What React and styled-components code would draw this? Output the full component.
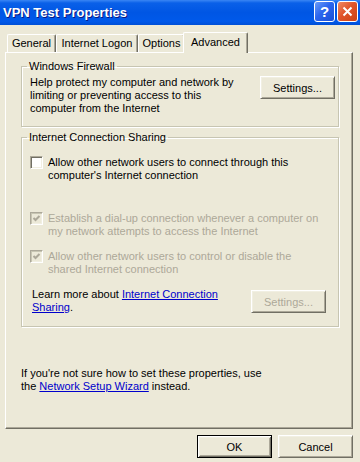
import React from 'react';
import styled, { createGlobalStyle, css } from 'styled-components';

const GlobalStyle = createGlobalStyle`
  html, body {
    margin: 0;
    padding: 0;
    background: #ece9d8;
  }
  body {
    font-family: "Liberation Sans", Arial, sans-serif;
    font-size: 11px;
    line-height: 13px;
    color: #000;
  }
`;

const Window = styled.div`
  width: 360px;
  height: 462px;
  display: flex;
  flex-direction: column;
  overflow: hidden;
  background: #ece9d8;
`;

const TitleBar = styled.div`
  height: 25px;
  flex: none;
  display: flex;
  align-items: center;
  justify-content: space-between;
  padding: 0 2px 0 3px;
  background: linear-gradient(
    to bottom,
    #3a86f4 0%,
    #0a60e8 12%,
    #0056e4 50%,
    #0059ea 85%,
    #004fd6 100%
  );
`;

const Title = styled.span`
  font-weight: bold;
  font-size: 13px;
  color: #fff;
  text-shadow: 1px 1px 0 #0a1883;
  white-space: nowrap;
`;

const TitleButtons = styled.div`
  display: flex;
  gap: 2px;
  align-self: flex-start;
  margin-top: 1px;
`;

const CaptionButton = styled.div`
  width: 21px;
  height: 21px;
  box-sizing: border-box;
  border: 1px solid #fff;
  border-radius: 3px;
  display: flex;
  align-items: center;
  justify-content: center;
  color: #fff;
  font-weight: bold;
  font-size: 15px;
  ${(p) =>
    p.$close
      ? css`
          background: linear-gradient(135deg, #f08a64 0%, #e0552b 45%, #cc4214 100%);
        `
      : css`
          background: linear-gradient(135deg, #6b9cf8 0%, #2c66ee 45%, #1a4ed6 100%);
        `}
`;

const Body = styled.div`
  flex: 1;
  display: flex;
  flex-direction: column;
  padding: 7px 7px 0 5px;
`;

const TabRow = styled.div`
  display: flex;
  align-items: flex-end;
  height: 20px;
  padding-left: 2px;
`;

const Tab = styled.div`
  box-sizing: border-box;
  width: ${(p) => p.$width}px;
  height: 18px;
  display: flex;
  align-items: center;
  justify-content: center;
  border-top: 1px solid #fff;
  border-left: 1px solid #fff;
  border-right: 1px solid #716f64;
  box-shadow: inset -1px 0 0 #aca899;
  border-radius: 2px 2px 0 0;
  background: #ece9d8;
  white-space: nowrap;
  ${(p) =>
    p.$active &&
    css`
      position: relative;
      z-index: 1;
      height: 21px;
      margin-left: -2px;
      margin-bottom: -1px;
      padding-bottom: 2px;
    `}
`;

const Panel = styled.div`
  box-sizing: border-box;
  height: 377px;
  display: flex;
  flex-direction: column;
  padding: 7px 13px 0 15px;
  border-top: 1px solid #fff;
  border-left: 1px solid #fff;
  border-right: 1px solid #716f64;
  border-bottom: 1px solid #716f64;
  box-shadow: inset -1px -1px 0 #aca899;
`;

const GroupBox = styled.fieldset`
  margin: ${(p) => p.$gap || 0}px 0 0 0;
  padding: 0;
  min-width: 0;
  border: 1px solid #c7c5b2;
  box-shadow: inset 1px 1px 0 #fff, 1px 1px 0 #fff;
`;

const GroupTitle = styled.legend`
  margin-left: 5px;
  padding: 0 2px;
  line-height: 13px;
`;

const FirewallRow = styled.div`
  display: flex;
  justify-content: space-between;
  align-items: flex-start;
  padding: 3px 3px 11px 8px;
`;

const SharingBody = styled.div`
  display: flex;
  flex-direction: column;
  padding: 12px 0 12px 0;
`;

const Text = styled.div`
  white-space: nowrap;
  color: ${(p) => (p.$disabled ? '#aca899' : '#000')};
`;

const CheckRow = styled.label`
  display: flex;
  align-items: flex-start;
  gap: 5px;
  padding-left: 8px;
  margin-top: ${(p) => p.$gap || 0}px;
`;

const CheckBox = styled.span`
  flex: none;
  box-sizing: border-box;
  width: 13px;
  height: 13px;
  display: flex;
  align-items: center;
  justify-content: center;
  border-top: 1px solid #aca899;
  border-left: 1px solid #aca899;
  border-bottom: 1px solid #fff;
  border-right: 1px solid #fff;
  box-shadow: inset 1px 1px 0 #716f64, inset -1px -1px 0 #f1efe2;
  background: ${(p) => (p.$disabled ? '#ece9d8' : '#fff')};
  ${(p) =>
    p.$disabled &&
    css`
      box-shadow: inset 1px 1px 0 #c7c5b2, inset -1px -1px 0 #f1efe2;
    `}
`;

const LearnRow = styled.div`
  display: flex;
  justify-content: space-between;
  align-items: flex-start;
  margin-top: 12px;
  padding: 0 12px 0 10px;
`;

const Link = styled.a`
  color: #0000cc;
  text-decoration: underline;
  cursor: pointer;
`;

const Button = styled.button`
  box-sizing: border-box;
  width: 75px;
  height: 23px;
  padding: 0;
  margin: ${(p) => p.$offset || 0}px 0 0 0;
  font-family: "Liberation Sans", Arial, sans-serif;
  font-size: 11px;
  background: #ece9d8;
  color: ${(p) => (p.disabled ? '#aca899' : '#000')};
  border: 1px solid;
  border-color: #fff #716f64 #716f64 #fff;
  box-shadow: inset 1px 1px 0 #f1efe2, inset -1px -1px 0 #aca899;
  ${(p) =>
    p.$default &&
    css`
      border-color: #000;
      box-shadow: inset 1px 1px 0 #fff, inset -1px -1px 0 #716f64,
        inset 2px 2px 0 #f1efe2, inset -2px -2px 0 #aca899;
    `}
`;

const Hint = styled.div`
  margin-top: 40px;
  white-space: nowrap;
`;

const ButtonRow = styled.div`
  display: flex;
  justify-content: flex-end;
  gap: 6px;
  margin-top: 6px;
`;

const tabs = [
  { label: 'General', width: 49 },
  { label: 'Internet Logon', width: 82 },
  { label: 'Options', width: 47 },
  { label: 'Advanced', width: 65, active: true },
];

const CheckMark = () => (
  <svg width="9" height="9" viewBox="0 0 9 9">
    <path d="M1.5 4 L3.5 6 L7.5 2" fill="none" stroke="#aca899" strokeWidth="2" />
  </svg>
);

const CloseIcon = () => (
  <svg width="11" height="11" viewBox="0 0 11 11">
    <path d="M1.5 1.5 L9.5 9.5 M9.5 1.5 L1.5 9.5" stroke="#fff" strokeWidth="2" />
  </svg>
);

const App = () => {
  return (
    <Window>
      <GlobalStyle />
      <TitleBar>
        <Title>VPN Test Properties</Title>
        <TitleButtons>
          <CaptionButton>?</CaptionButton>
          <CaptionButton $close>
            <CloseIcon />
          </CaptionButton>
        </TitleButtons>
      </TitleBar>

      <Body>
        <TabRow>
          {tabs.map((tab) => (
            <Tab key={tab.label} $width={tab.width} $active={tab.active}>
              {tab.label}
            </Tab>
          ))}
        </TabRow>

        <Panel>
          <GroupBox>
            <GroupTitle>Windows Firewall</GroupTitle>
            <FirewallRow>
              <Text>
                Help protect my computer and network by
                <br />
                limiting or preventing access to this
                <br />
                computer from the Internet
              </Text>
              <Button>Settings...</Button>
            </FirewallRow>
          </GroupBox>

          <GroupBox $gap={4}>
            <GroupTitle>Internet Connection Sharing</GroupTitle>
            <SharingBody>
              <CheckRow>
                <CheckBox />
                <Text>
                  Allow other network users to connect through this
                  <br />
                  computer's Internet connection
                </Text>
              </CheckRow>
              <CheckRow $gap={30}>
                <CheckBox $disabled>
                  <CheckMark />
                </CheckBox>
                <Text $disabled>
                  Establish a dial-up connection whenever a computer on
                  <br />
                  my network attempts to access the Internet
                </Text>
              </CheckRow>
              <CheckRow $gap={12}>
                <CheckBox $disabled>
                  <CheckMark />
                </CheckBox>
                <Text $disabled>
                  Allow other network users to control or disable the
                  <br />
                  shared Internet connection
                </Text>
              </CheckRow>
              <LearnRow>
                <Text>
                  Learn more about <Link>Internet Connection</Link>
                  <br />
                  <Link>Sharing</Link>.
                </Text>
                <Button disabled $offset={2}>
                  Settings...
                </Button>
              </LearnRow>
            </SharingBody>
          </GroupBox>

          <Hint>
            If you're not sure how to set these properties, use
            <br />
            the <Link>Network Setup Wizard</Link> instead.
          </Hint>
        </Panel>

        <ButtonRow>
          <Button $default>OK</Button>
          <Button>Cancel</Button>
        </ButtonRow>
      </Body>
    </Window>
  );
};

export default App;
